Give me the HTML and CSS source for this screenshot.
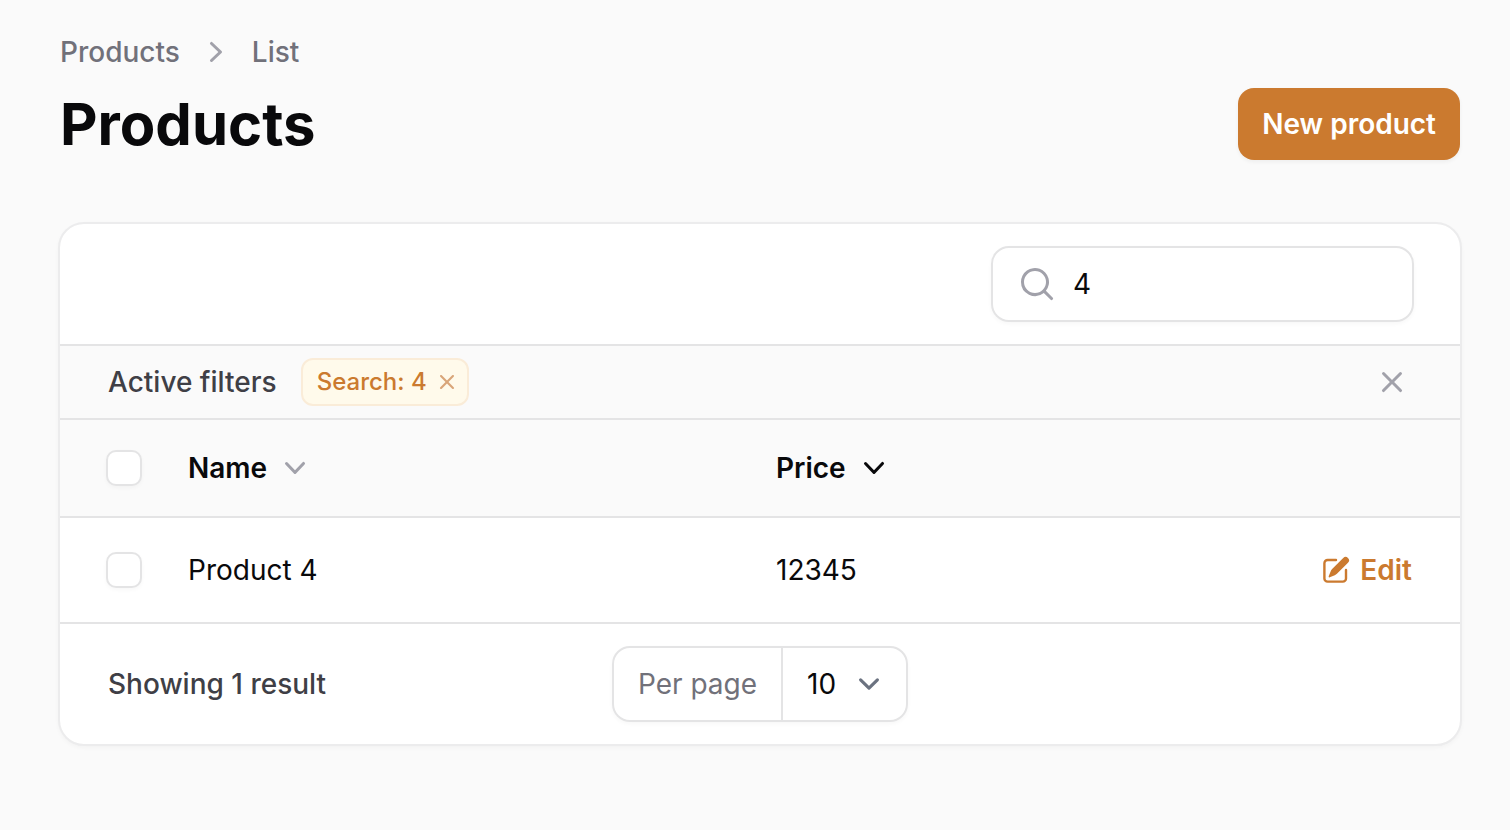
FILE: index.html
```html
<!DOCTYPE html>
<html lang="en">
<head>
<meta charset="utf-8">
<meta name="viewport" content="width=device-width, initial-scale=1">
<title>Products</title>
<link rel="stylesheet" href="styles.css">
</head>
<body>
<svg class="sprite" aria-hidden="true">
  <symbol id="chevron-down" viewBox="0 0 20 20"><path fill-rule="evenodd" d="M5.23 7.21a.75.75 0 0 1 1.06.02L10 11.168l3.71-3.938a.75.75 0 1 1 1.08 1.04l-4.25 4.5a.75.75 0 0 1-1.08 0l-4.25-4.5a.75.75 0 0 1 .02-1.06z" clip-rule="evenodd"/></symbol>
  <symbol id="chevron-right" viewBox="0 0 20 20"><path fill-rule="evenodd" d="M7.21 14.77a.75.75 0 0 1 .02-1.06L11.168 10 7.23 6.29a.75.75 0 1 1 1.04-1.08l4.5 4.25a.75.75 0 0 1 0 1.08l-4.5 4.25a.75.75 0 0 1-1.06-.02z" clip-rule="evenodd"/></symbol>
  <symbol id="x-mark" viewBox="0 0 20 20"><path d="M6.28 5.22a.75.75 0 0 0-1.06 1.06L8.94 10l-3.72 3.72a.75.75 0 1 0 1.06 1.06L10 11.06l3.72 3.72a.75.75 0 1 0 1.06-1.06L11.06 10l3.72-3.72a.75.75 0 0 0-1.06-1.06L10 8.94 6.28 5.22z"/></symbol>
</svg>
<main class="page">
  <header class="header">
    <nav class="breadcrumbs" aria-label="Breadcrumb">
      <a href="#">Products</a>
      <svg class="icon icon-muted"><use href="#chevron-right"/></svg>
      <a href="#">List</a>
    </nav>
    <div class="header-row">
      <h1 class="title">Products</h1>
      <button type="button" class="btn">New product</button>
    </div>
  </header>

  <section class="card">
    <div class="toolbar">
      <label class="search">
        <svg class="icon icon-muted" viewBox="0 0 20 20" aria-hidden="true"><path fill-rule="evenodd" d="M9 3.5a5.5 5.5 0 1 0 0 11 5.5 5.5 0 0 0 0-11zM2 9a7 7 0 1 1 12.452 4.391l3.328 3.329a.75.75 0 1 1-1.06 1.06l-3.329-3.328A7 7 0 0 1 2 9z" clip-rule="evenodd"/></svg>
        <input class="search-input" type="text" value="4" aria-label="Search">
      </label>
    </div>

    <div class="filters">
      <span class="filters-label">Active filters</span>
      <span class="badge">Search: 4
        <button type="button" class="icon-btn badge-remove" aria-label="Remove filter"><svg class="icon icon-small"><use href="#x-mark"/></svg></button>
      </span>
      <button type="button" class="icon-btn filters-clear" aria-label="Remove all filters"><svg class="icon icon-muted"><use href="#x-mark"/></svg></button>
    </div>

    <table class="table">
      <thead>
        <tr>
          <th class="col-check"><input class="checkbox" type="checkbox" aria-label="Select all products"></th>
          <th class="col-name"><button type="button" class="sort">Name <svg class="icon icon-muted"><use href="#chevron-down"/></svg></button></th>
          <th><button type="button" class="sort">Price <svg class="icon"><use href="#chevron-down"/></svg></button></th>
          <th class="col-actions"></th>
        </tr>
      </thead>
      <tbody>
        <tr>
          <td class="col-check"><input class="checkbox" type="checkbox" aria-label="Select Product 4"></td>
          <td class="col-name">Product 4</td>
          <td>12345</td>
          <td class="col-actions">
            <a href="#" class="edit">
              <svg class="icon icon-medium" viewBox="0 0 20 20" aria-hidden="true"><path d="m5.433 13.917 1.262-3.155A4 4 0 0 1 7.58 9.42l6.92-6.918a2.121 2.121 0 0 1 3 3l-6.92 6.918c-.383.383-.84.685-1.343.886l-3.154 1.262a.5.5 0 0 1-.65-.65z"/><path d="M3.5 5.75c0-.69.56-1.25 1.25-1.25H10A.75.75 0 0 0 10 3H4.75A2.75 2.75 0 0 0 2 5.75v9.5A2.75 2.75 0 0 0 4.75 18h9.5A2.75 2.75 0 0 0 17 15.25V10a.75.75 0 0 0-1.5 0v5.25c0 .69-.56 1.25-1.25 1.25h-9.5c-.69 0-1.25-.56-1.25-1.25v-9.5z"/></svg>
              Edit
            </a>
          </td>
        </tr>
      </tbody>
    </table>

    <footer class="footer">
      <span class="summary">Showing 1 result</span>
      <div class="per-page">
        <label class="per-page-label" for="per-page">Per page</label>
        <div class="select-wrap">
          <select id="per-page" class="select">
            <option>5</option>
            <option selected>10</option>
            <option>25</option>
            <option>50</option>
          </select>
          <svg class="select-arrow" viewBox="0 0 20 20" aria-hidden="true"><path d="m6 8 4 4 4-4"/></svg>
        </div>
      </div>
    </footer>
  </section>
</main>
</body>
</html>
```
FILE: styles.css
```css
:root {
  --primary: #cb7a2f;
  --line: #e4e4e5;
  --ink: #09090b;
  --muted: #71717a;
  --soft: #a1a1aa;
}

* { box-sizing: border-box; }

body {
  margin: 0;
  background: #fafafa;
  color: var(--ink);
  font: 400 28px/40px Inter, "Liberation Sans", sans-serif;
  font-optical-sizing: none;
}

button, input, select { font: inherit; color: inherit; }
button { margin: 0; padding: 0; border: 0; background: none; cursor: pointer; }
a { color: inherit; text-decoration: none; }

.sprite { display: none; }
.icon { display: block; flex: none; width: 40px; height: 40px; fill: currentColor; }
.icon-medium { width: 32px; height: 32px; }
.icon-small { width: 28px; height: 28px; }
.icon-muted { color: var(--soft); }

.page { display: flex; flex-direction: column; gap: 62px; padding: 32px 48px 32px 58px; }

.header { display: flex; flex-direction: column; gap: 16px; padding: 0 2px; }
.breadcrumbs { display: flex; align-items: center; gap: 16px; color: var(--muted); font-weight: 500; }
.header-row { display: flex; align-items: center; justify-content: space-between; }
.title { margin: 0; font-size: 58px; line-height: 72px; font-weight: 700; }
.btn {
  padding: 16px 24px;
  border-radius: 16px;
  background: var(--primary);
  color: #fff;
  font-weight: 600;
  box-shadow: 0 2px 4px rgb(0 0 0 / 5%);
}

.card {
  border: 2px solid #ececed;
  border-radius: 26px;
  background: #fff;
  background-clip: padding-box;
  box-shadow: 0 2px 4px rgb(0 0 0 / 3%);
}

.toolbar { display: flex; justify-content: flex-end; padding: 22px 46px; }
.search {
  display: flex;
  align-items: center;
  gap: 16px;
  width: 423px;
  padding: 16px 24px;
  border: 2px solid var(--line);
  border-radius: 18px;
  box-shadow: 0 2px 4px rgb(0 0 0 / 3%);
}
.search-input { flex: 1; min-width: 0; height: 40px; padding: 0; border: 0; outline: 0; background: none; }

.filters {
  display: flex;
  align-items: center;
  gap: 24px;
  padding: 12px 48px;
  border-top: 2px solid var(--line);
  background: #fafafa;
}
.filters-label { color: #3f3f46; font-weight: 500; }
.badge {
  display: flex;
  align-items: center;
  gap: 6px;
  padding: 6px 6px 6px 14px;
  border: 2px solid #faecd8;
  border-radius: 12px;
  background: #fffaeb;
  color: var(--primary);
  font-size: 24px;
  line-height: 32px;
  font-weight: 500;
}
.badge-remove { color: #b45309; opacity: 0.5; }
.filters-clear { margin-left: auto; }

.table { width: 100%; border-collapse: separate; border-spacing: 0; table-layout: fixed; text-align: left; }
.table th, .table td { padding: 0 24px; border-top: 2px solid var(--line); }
.table th { height: 98px; background: #fafafa; font-weight: 600; }
.table td { height: 106px; }
.table .col-check { width: 104px; padding: 0 0 0 46px; }
.table .col-name { width: 42%; }
.table .col-actions { padding-right: 48px; }
.sort { display: flex; align-items: center; gap: 8px; }

.checkbox {
  display: block;
  appearance: none;
  width: 36px;
  height: 36px;
  margin: 0;
  border: 2px solid var(--line);
  border-radius: 10px;
  background: #fff;
  box-shadow: 0 2px 4px rgb(0 0 0 / 3%);
}
.checkbox:checked { background: var(--primary); }

.edit { display: flex; align-items: center; justify-content: flex-end; gap: 8px; color: var(--primary); font-weight: 600; }

.footer {
  display: grid;
  grid-template-columns: 1fr auto 1fr;
  align-items: center;
  padding: 22px 48px;
  border-top: 2px solid var(--line);
}
.summary { color: #3f3f46; font-weight: 500; }
.per-page {
  display: flex;
  border: 2px solid var(--line);
  border-radius: 18px;
  box-shadow: 0 2px 4px rgb(0 0 0 / 3%);
}
.per-page-label { padding: 16px 24px; border-right: 2px solid var(--line); color: var(--muted); }
.select-wrap { display: grid; align-items: center; }
.select {
  grid-area: 1 / 1;
  appearance: none;
  height: 72px;
  padding: 0 64px 0 24px;
  border: 0;
  outline: 0;
  background: none;
}
.select-arrow {
  grid-area: 1 / 1;
  justify-self: end;
  width: 42px;
  height: 42px;
  margin-right: 16px;
  fill: none;
  stroke: #6b7280;
  stroke-width: 1.5;
  stroke-linecap: round;
  stroke-linejoin: round;
  pointer-events: none;
}
```
